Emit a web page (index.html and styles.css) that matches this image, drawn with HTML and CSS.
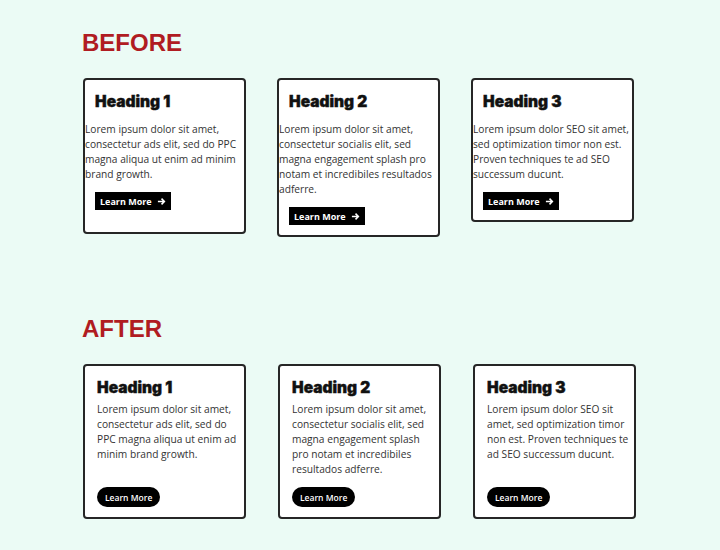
FILE: index.html
```html
<!DOCTYPE html>
<html lang="en">

<head>
    <meta charset="UTF-8">
    <meta name="viewport" content="width=device-width, initial-scale=1.0">
    <title>Card Spacing</title>
    <link rel="stylesheet" href="styles.css">
</head>

<body>
    <div class="page">
        <!-- original cards: uneven padding, text flush to the border -->
        <section class="compare before">
            <h2 class="compare-title">BEFORE</h2>
            <div class="card-row">
                <div class="card card-loose">
                    <h3 class="card-heading">Heading 1</h3>
                    <p class="card-text">Lorem ipsum dolor sit amet, consectetur ads elit, sed do PPC magna aliqua ut enim ad minim brand growth.</p>
                    <a class="card-button" href="#">Learn More
                        <svg class="arrow" viewBox="0 0 10 10" width="9" height="9">
                            <path d="M1 5h7M5 1.8L8.2 5 5 8.2" fill="none" stroke="#fff" stroke-width="1.7" />
                        </svg>
                    </a>
                </div>
                <div class="card">
                    <h3 class="card-heading">Heading 2</h3>
                    <p class="card-text">Lorem ipsum dolor sit amet, consectetur socialis elit, sed magna engagement splash pro notam et incredibiles resultados adferre.</p>
                    <a class="card-button" href="#">Learn More
                        <svg class="arrow" viewBox="0 0 10 10" width="9" height="9">
                            <path d="M1 5h7M5 1.8L8.2 5 5 8.2" fill="none" stroke="#fff" stroke-width="1.7" />
                        </svg>
                    </a>
                </div>
                <div class="card">
                    <h3 class="card-heading">Heading 3</h3>
                    <p class="card-text">Lorem ipsum dolor SEO sit amet, sed optimization timor non est. Proven techniques te ad SEO successum ducunt.</p>
                    <a class="card-button" href="#">Learn More
                        <svg class="arrow" viewBox="0 0 10 10" width="9" height="9">
                            <path d="M1 5h7M5 1.8L8.2 5 5 8.2" fill="none" stroke="#fff" stroke-width="1.7" />
                        </svg>
                    </a>
                </div>
            </div>
        </section>

        <!-- fixed cards: consistent padding, buttons pinned to the bottom -->
        <section class="compare after">
            <h2 class="compare-title">AFTER</h2>
            <div class="card-row">
                <div class="card">
                    <h3 class="card-heading">Heading 1</h3>
                    <p class="card-text">Lorem ipsum dolor sit amet,<br>consectetur ads elit, sed do<br>PPC magna aliqua ut enim ad<br>minim brand growth.</p>
                    <a class="card-button" href="#">Learn More</a>
                </div>
                <div class="card">
                    <h3 class="card-heading">Heading 2</h3>
                    <p class="card-text">Lorem ipsum dolor sit amet,<br>consectetur socialis elit, sed<br>magna engagement splash<br>pro notam et incredibiles<br>resultados adferre.</p>
                    <a class="card-button" href="#">Learn More</a>
                </div>
                <div class="card">
                    <h3 class="card-heading">Heading 3</h3>
                    <p class="card-text">Lorem ipsum dolor SEO sit<br>amet, sed optimization timor<br>non est. Proven techniques te<br>ad SEO successum ducunt.</p>
                    <a class="card-button" href="#">Learn More</a>
                </div>
            </div>
        </section>
    </div>
</body>

</html>
```
FILE: styles.css
```css
* {
    margin: 0;
    padding: 0;
    box-sizing: border-box;
}

body {
    font-family: 'Open Sans', 'Liberation Sans', sans-serif;
    background: #ebfbf5;
    height: 100vh;
}

.page {
    padding: 29px 0 0 82px;
}

.compare-title {
    font-family: 'Liberation Sans', Arial, sans-serif;
    font-size: 24px;
    line-height: 28px;
    font-weight: bold;
    color: #b01c22;
    margin-bottom: 21px;
}

.after {
    margin-top: 78px;
}

.card-row {
    display: flex;
    gap: 31px;
    align-items: flex-start;
    padding-left: 1px;
}

.after .card-row {
    gap: 32px;
    align-items: stretch;
}

.card {
    width: 163px;
    background: white;
    border: 2px solid #262626;
    border-radius: 4px;
    padding: 12px 0 10px;
    display: flex;
    flex-direction: column;
    align-items: flex-start;
}

.card-loose {
    padding-bottom: 22px;
}

.card-heading {
    font-family: Inter, 'Noto Sans', sans-serif;
    font-weight: 900;
    font-size: 15.5px;
    line-height: 20px;
    color: #111;
    -webkit-text-stroke: 0.4px #111;
    margin: 0 0 10px 10px;
}

.card-text {
    font-size: 10.2px;
    line-height: 15px;
    color: #333;
}

.card-button {
    display: flex;
    align-items: center;
    gap: 5px;
    height: 18px;
    margin: 10px 0 0 10px;
    padding: 0 5px;
    background: #000;
    color: white;
    text-decoration: none;
    font-size: 9px;
    font-weight: bold;
}

/* after: one padding for everything inside the card */
.after .card {
    padding: 12px 10px 10px 12px;
}

.after .card-heading {
    margin: 0 0 4px;
}

.after .card-text {
    white-space: nowrap;
    margin-bottom: 10px;
}

.after .card-button {
    margin: auto 0 0;
    height: 20px;
    padding: 0 8px;
    border-radius: 10px;
    font-size: 8.5px;
    font-weight: 600;
}
```
